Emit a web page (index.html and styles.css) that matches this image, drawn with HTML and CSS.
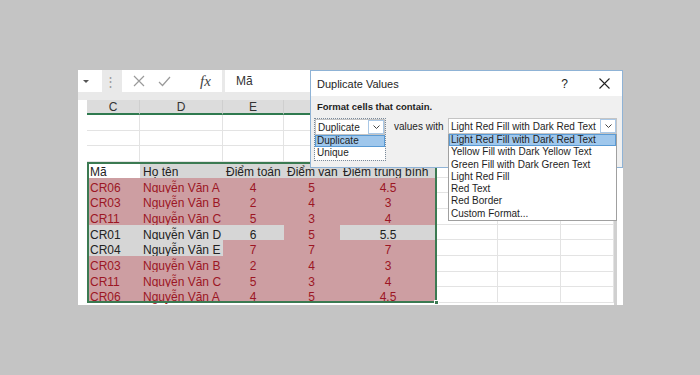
FILE: index.html
```html
<!DOCTYPE html>
<html lang="vi">
<head>
<meta charset="utf-8">
<title>Duplicate Values</title>
<link rel="stylesheet" href="styles.css">
</head>
<body>
<div class="stage">
  <div class="window">
    <div class="sheetwrap">
      <div class="fbar">
        <div class="namebox"><span class="tri"></span></div>
        <div class="sep">⋮</div>
        <div class="fbtns">
          <svg class="ico" width="12" height="12" viewBox="0 0 12 12"><path d="M1 1L11 11M11 1L1 11" stroke="#9a9a9a" stroke-width="1.2" fill="none"/></svg>
          <svg class="ico" width="13" height="11" viewBox="0 0 13 11"><path d="M1 6L4.5 9.5L12 1" stroke="#9a9a9a" stroke-width="1.2" fill="none"/></svg>
          <span class="fx">fx</span>
        </div>
        <div class="finput">Mã</div>
      </div>
      <div class="sheet">
        <div class="h"></div><div class="h sel">C</div><div class="h sel">D</div><div class="h sel">E</div><div class="h sel"></div><div class="h sel"></div><div class="h"></div><div class="h"></div><div class="h"></div>

        <div class="c"></div><div class="c"></div><div class="c"></div><div class="c"></div><div class="c"></div><div class="c"></div><div class="c"></div><div class="c"></div><div class="c"></div>
        <div class="c"></div><div class="c"></div><div class="c"></div><div class="c"></div><div class="c"></div><div class="c"></div><div class="c"></div><div class="c"></div><div class="c"></div>
        <div class="c"></div><div class="c"></div><div class="c"></div><div class="c"></div><div class="c"></div><div class="c"></div><div class="c"></div><div class="c"></div><div class="c"></div>

        <div class="c"></div><div class="c w">Mã</div><div class="c g">Họ tên</div><div class="c g">Điểm toán</div><div class="c g">Điểm văn</div><div class="c g">Điểm trung bình</div><div class="c"></div><div class="c"></div><div class="c"></div>
        <div class="c"></div><div class="c r">CR06</div><div class="c r">Nguyễn Văn A</div><div class="c r n">4</div><div class="c r n">5</div><div class="c r n">4.5</div><div class="c"></div><div class="c"></div><div class="c"></div>
        <div class="c"></div><div class="c r">CR03</div><div class="c r">Nguyễn Văn B</div><div class="c r n">2</div><div class="c r n">4</div><div class="c r n">3</div><div class="c"></div><div class="c"></div><div class="c"></div>
        <div class="c"></div><div class="c r">CR11</div><div class="c r">Nguyễn Văn C</div><div class="c r n">5</div><div class="c r n">3</div><div class="c r n">4</div><div class="c"></div><div class="c"></div><div class="c"></div>
        <div class="c"></div><div class="c g">CR01</div><div class="c g">Nguyễn Văn D</div><div class="c g n">6</div><div class="c r n">5</div><div class="c g n">5.5</div><div class="c"></div><div class="c"></div><div class="c"></div>
        <div class="c"></div><div class="c g">CR04</div><div class="c g">Nguyễn Văn E</div><div class="c r n">7</div><div class="c r n">7</div><div class="c r n">7</div><div class="c"></div><div class="c"></div><div class="c"></div>
        <div class="c"></div><div class="c r">CR03</div><div class="c r">Nguyễn Văn B</div><div class="c r n">2</div><div class="c r n">4</div><div class="c r n">3</div><div class="c"></div><div class="c"></div><div class="c"></div>
        <div class="c"></div><div class="c r">CR11</div><div class="c r">Nguyễn Văn C</div><div class="c r n">5</div><div class="c r n">3</div><div class="c r n">4</div><div class="c"></div><div class="c"></div><div class="c"></div>
        <div class="c"></div><div class="c r">CR06</div><div class="c r">Nguyễn Văn A</div><div class="c r n">4</div><div class="c r n">5</div><div class="c r n">4.5</div><div class="c"></div><div class="c"></div><div class="c"></div>

        <div class="selbox"><span class="handle"></span></div>
      </div>
    </div>
    <div class="vline"></div>

    <div class="dialog">
      <div class="dtitle">
        <span class="dname">Duplicate Values</span>
        <span class="dq">?</span>
        <svg class="dclose" width="11" height="11" viewBox="0 0 11 11"><path d="M0.5 0.5L10.5 10.5M10.5 0.5L0.5 10.5" stroke="#222" stroke-width="1.1" fill="none"/></svg>
      </div>
      <div class="dbody">
        <div class="dlabel">Format cells that contain.</div>
        <div class="drow">
          <div class="focus">
            <div class="combo c1">
              <span class="ctext">Duplicate</span>
              <span class="cbtn"><svg width="7" height="4" viewBox="0 0 7 4"><path d="M0.5 0.5L3.5 3.5L6.5 0.5" stroke="#444" fill="none"/></svg></span>
            </div>
            <div class="list l1">
              <div class="item hi">Duplicate</div>
              <div class="item">Unique</div>
            </div>
          </div>
          <span class="vwith">values with</span>
          <div class="drop2">
            <div class="combo c2">
              <span class="ctext">Light Red Fill with Dark Red Text</span>
              <span class="cbtn"><svg width="7" height="4" viewBox="0 0 7 4"><path d="M0.5 0.5L3.5 3.5L6.5 0.5" stroke="#444" fill="none"/></svg></span>
            </div>
            <div class="list l2">
              <div class="item hi">Light Red Fill with Dark Red Text</div>
              <div class="item">Yellow Fill with Dark Yellow Text</div>
              <div class="item">Green Fill with Dark Green Text</div>
              <div class="item">Light Red Fill</div>
              <div class="item">Red Text</div>
              <div class="item">Red Border</div>
              <div class="item">Custom Format...</div>
            </div>
          </div>
        </div>
      </div>
    </div>
  </div>
</div>
</body>
</html>
```
FILE: styles.css
```css
* { box-sizing: border-box; }
html, body { margin: 0; padding: 0; }
body {
  background: #c4c4c4;
  font-family: "Liberation Sans", Arial, sans-serif;
  color: #222;
}
.stage {
  width: 700px;
  height: 375px;
  padding: 70px 0 0 78px;
}
.window {
  position: relative;
  width: 545px;
  height: 235px;
  background: #fff;
  display: flex;
}
.sheetwrap {
  width: 536px;
  display: flex;
  flex-direction: column;
}
.vline {
  width: 3px;
  background: #d0d0d0;
  margin-top: 30px;
}

/* formula bar */
.fbar {
  height: 30px;
  padding-bottom: 8px;
  display: flex;
  align-items: stretch;
  background: #e9e9e9;
}
.namebox {
  width: 24px;
  background: #fff;
  display: flex;
  align-items: center;
  padding-left: 5px;
}
.tri {
  width: 0; height: 0;
  border-left: 3px solid transparent;
  border-right: 3px solid transparent;
  border-top: 3px solid #555;
}
.sep {
  width: 16px;
  color: #9a9a9a;
  font-size: 13px;
  display: flex;
  align-items: center;
  justify-content: center;
  margin-right: 4px;
}
.fbtns {
  width: 100px;
  background: #fff;
  display: flex;
  align-items: center;
  padding-left: 11px;
  gap: 13px;
}
.fx {
  font-family: "Liberation Serif", serif;
  font-style: italic;
  font-size: 15px;
  color: #444;
  margin-left: 16px;
}
.finput {
  flex: 1;
  margin-left: 3px;
  background: #fff;
  font-size: 12px;
  display: flex;
  align-items: center;
  padding-left: 11px;
  color: #333;
}

/* sheet grid */
.sheet {
  position: relative;
  display: grid;
  grid-template-columns: 9px 53px 83px 61px 56px 97px 61px 63px 53px;
  grid-template-rows: 15px;
  grid-auto-rows: 15.67px;
  font-size: 12px;
}
.h {
  background: #e6e6e6;
  border-right: 1px solid #cfcfcf;
  border-bottom: 1px solid #cfcfcf;
  color: #444;
  font-size: 12px;
  text-align: center;
  line-height: 14px;
}
.h:first-child { background: #fff; border: 0; }
.h.sel {
  background: #dcdcdc;
  border-bottom: 2px solid #2f7a4f;
  color: #333;
}
.c {
  border-right: 1px solid #e3e3e3;
  border-bottom: 1px solid #e3e3e3;
  line-height: 16px;
  padding: 2px 0 0 3px;
  white-space: nowrap;
  overflow: visible;
  color: #222;
}
.c:nth-child(9n+1) { border: 0; }
.c.r { background: #cd9ea2; border-color: #cd9ea2; color: #9c1624; }
.c.g { background: #d6d6d6; border-color: #d6d6d6; color: #222; }
.c.w { background: #fff; border-color: #fff; }
.c.n { text-align: center; padding-left: 0; }

.selbox {
  position: absolute;
  grid-column: 2 / 7;
  grid-row: 5 / 14;
  inset: 0;
  border: 2px solid #3b7a52;
  pointer-events: none;
}
.handle {
  position: absolute;
  right: -4px;
  bottom: -4px;
  width: 5px;
  height: 5px;
  background: #3b7a52;
  border: 1px solid #fff;
}

/* dialog */
.dialog {
  position: absolute;
  left: 232px;
  top: 0;
  width: 313px;
  height: 98px;
  background: #f0f0f0;
  border: 1px solid #8fb3d6;
  font-size: 10px;
  color: #1e1e1e;
}
.dtitle {
  height: 25px;
  background: #fff;
  display: flex;
  align-items: center;
  padding: 0 12px 0 6px;
}
.dname { font-size: 11px; flex: 1; }
.dq { font-size: 12px; margin-right: 31px; }
.dbody { padding: 5px 5px 0 5px; }
.dlabel {
  font-weight: bold;
  font-size: 9.5px;
  height: 17px;
  padding-left: 1px;
}
.drow {
  display: flex;
  align-items: flex-start;
}
.focus {
  width: 72px;
  height: 43px;
  border: 1px dotted #7a8a9a;
  margin-left: -2px;
}
.combo {
  height: 16px;
  background: #fff;
  border: 1px solid #c4c4c4;
  display: flex;
  align-items: center;
  padding-left: 2px;
}
.c1 { width: 70px; }
.ctext { flex: 1; white-space: nowrap; }
.cbtn {
  width: 16px;
  height: 14px;
  border-left: 1px solid #c4c4c4;
  background: #fff;
  display: flex;
  align-items: center;
  justify-content: center;
  outline: 1px solid #aac8e6;
  outline-offset: -1px;
}
.list { background: #fff; }
.l1 { width: 70px; }
.l2 {
  width: 169px;
  border: 1px solid #a0a0a0;
  border-top: 0;
  position: relative;
  z-index: 2;
}
.item {
  height: 12.3px;
  line-height: 12.3px;
  padding-left: 2px;
  white-space: nowrap;
}
.item.hi {
  background: #9fc7ec;
  outline: 1px solid #5a9bd5;
  outline-offset: -1px;
}
.vwith {
  margin: 3px 0 0 8px;
  width: 54px;
  line-height: 12px;
}
.drop2 { width: 169px; }
.c2 { width: 169px; }
```
